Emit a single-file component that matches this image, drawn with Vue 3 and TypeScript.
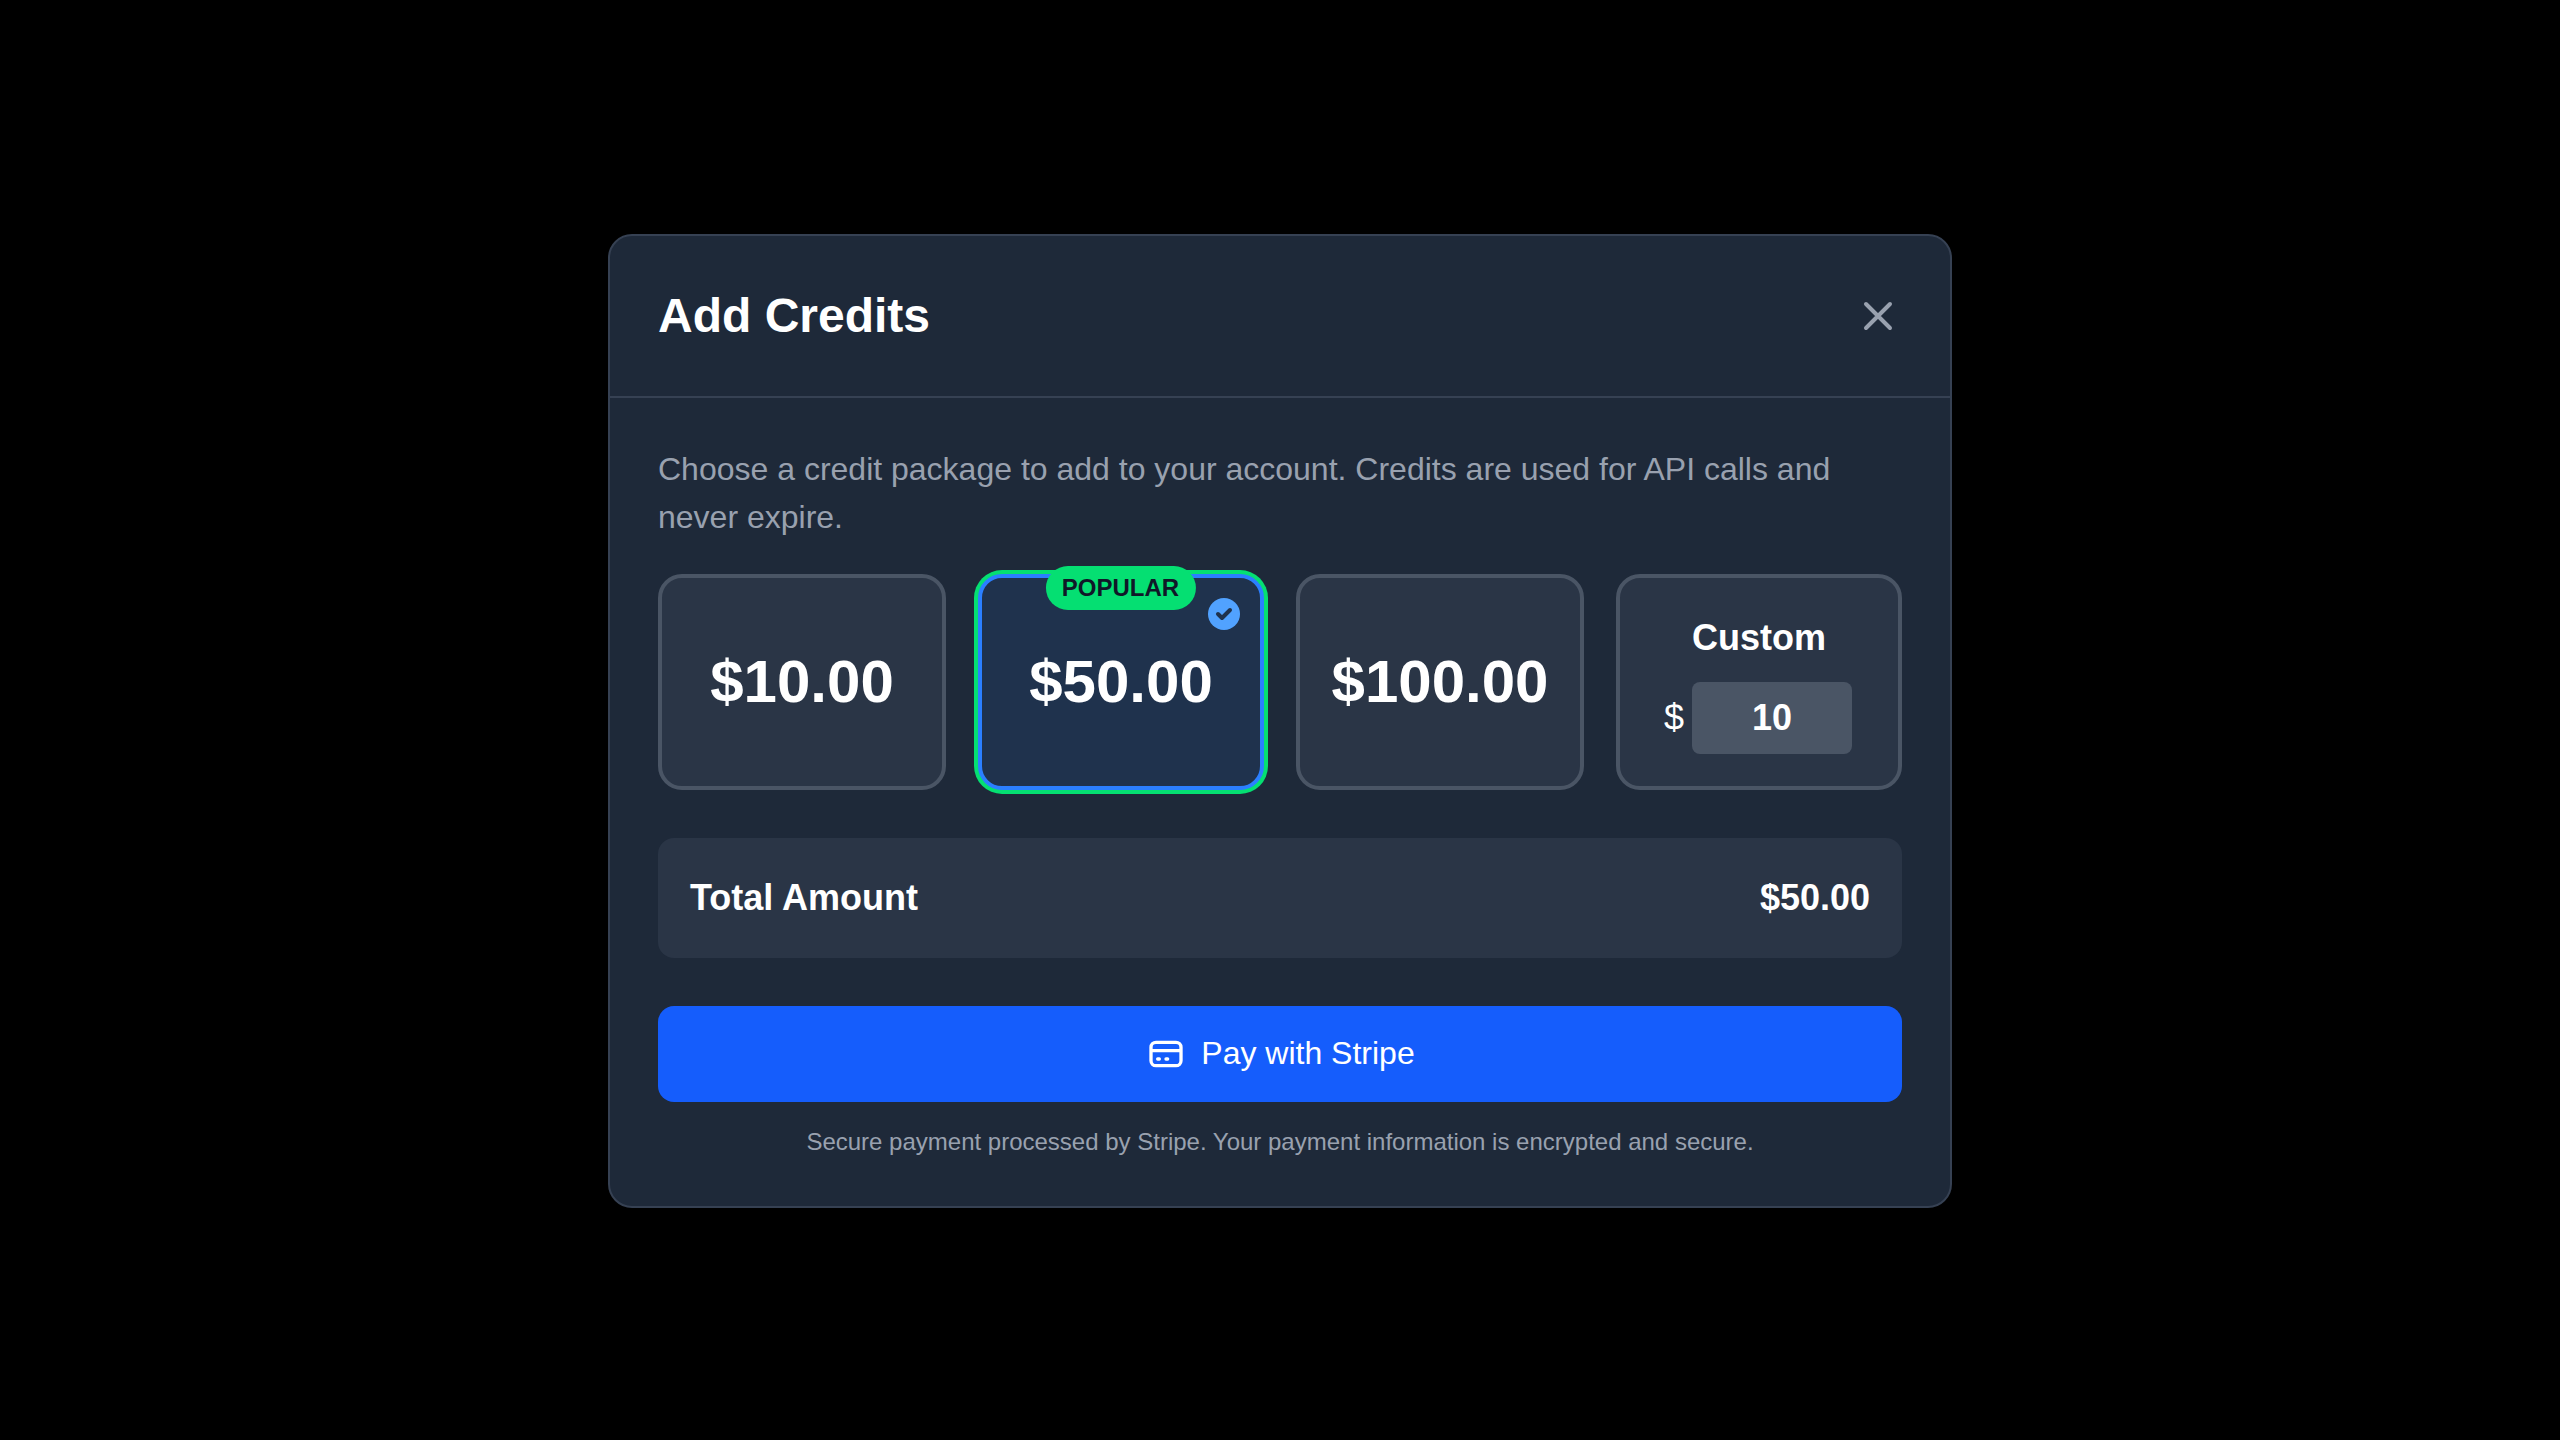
<script setup lang="ts">
import { ref } from 'vue'

const custom = ref('10')
</script>

<template>
  <div class="overlay">
    <div class="modal">
      <header class="head">
        <h2 class="title">Add Credits</h2>
        <button class="close" type="button" aria-label="Close">
          <svg width="48" height="48" viewBox="0 0 24 24" fill="none" stroke="currentColor" stroke-width="2" stroke-linecap="round" stroke-linejoin="round">
            <path d="M6 18L18 6M6 6l12 12" />
          </svg>
        </button>
      </header>
      <div class="body">
        <p class="desc">Choose a credit package to add to your account. Credits are used for API calls and never expire.</p>
        <div class="packages">
          <div class="card"><span class="amount">$10.00</span></div>
          <div class="card selected">
            <span class="badge">POPULAR</span>
            <span class="tick">
              <svg width="32" height="32" viewBox="0 0 32 32" fill="none">
                <path d="M10 16l4 4 8-8" stroke="#1f324d" stroke-width="4" stroke-linecap="round" stroke-linejoin="round" />
              </svg>
            </span>
            <span class="amount">$50.00</span>
          </div>
          <div class="card"><span class="amount">$100.00</span></div>
          <div class="card custom">
            <span class="custom-label">Custom</span>
            <div class="custom-row">
              <span class="dollar">$</span>
              <input v-model="custom" class="custom-input" type="text" />
            </div>
          </div>
        </div>
        <div class="total">
          <span>Total Amount</span>
          <span>$50.00</span>
        </div>
        <button class="pay" type="button">
          <svg class="pay-icon" width="40" height="40" viewBox="0 0 24 24" fill="none" stroke="currentColor" stroke-width="2" stroke-linecap="round" stroke-linejoin="round">
            <path d="M3 10h18M7 15h1m4 0h1m-7 4h12a3 3 0 003-3V8a3 3 0 00-3-3H6a3 3 0 00-3 3v8a3 3 0 003 3z" />
          </svg>
          <span class="pay-label">Pay with Stripe</span>
        </button>
        <p class="note">Secure payment processed by Stripe. Your payment information is encrypted and secure.</p>
      </div>
    </div>
  </div>
</template>

<style scoped>
.overlay {
  box-sizing: border-box;
  height: 1440px;
  padding-top: 2px;
  background: #000;
  display: flex;
  align-items: center;
  justify-content: center;
  font-family: "Liberation Sans", Arial, sans-serif;
  color: #fff;
}
.modal {
  box-sizing: border-box;
  width: 1344px;
  background: #1e2939;
  border: 2px solid #364153;
  border-radius: 24px;
}
.head {
  display: flex;
  align-items: center;
  justify-content: space-between;
  padding: 48px;
  border-bottom: 2px solid #364153;
}
.title {
  margin: 0;
  font-size: 48px;
  line-height: 64px;
  font-weight: 700;
}
.close {
  display: flex;
  padding: 0;
  border: 0;
  background: none;
  color: #99a1af;
}
.body {
  padding: 48px;
  display: flex;
  flex-direction: column;
}
.desc {
  margin: -1px 0 33px;
  font-size: 32px;
  line-height: 48px;
  color: #99a1af;
}
.packages {
  display: grid;
  grid-template-columns: 288px 286px 288px 286px;
  column-gap: 32px;
  margin-bottom: 48px;
}
.card {
  position: relative;
  box-sizing: border-box;
  height: 216px;
  display: flex;
  flex-direction: column;
  align-items: center;
  justify-content: center;
  background: #2a3546;
  border: 4px solid #4a5565;
  border-radius: 24px;
}
.selected {
  background: #1f324d;
  border-color: #2b7fff;
  box-shadow: 0 0 0 4px #05df72;
}
.amount {
  font-size: 60px;
  line-height: 72px;
  font-weight: 700;
}
.badge {
  position: absolute;
  top: -12px;
  left: 50%;
  transform: translateX(-50%);
  margin-left: -0.5px;
  padding: 6px 16.4px;
  border-radius: 999px;
  background: #05df72;
  color: #101828;
  font-size: 24px;
  line-height: 32px;
  font-weight: 700;
  white-space: nowrap;
}
.tick {
  position: absolute;
  top: 20px;
  right: 20px;
  width: 32px;
  height: 32px;
  border-radius: 50%;
  background: #51a2ff;
  display: flex;
}
.custom-label {
  font-size: 36px;
  line-height: 56px;
  font-weight: 700;
  margin-bottom: 16px;
}
.custom-row {
  display: flex;
  align-items: center;
  gap: 8px;
  margin-right: 2px;
}
.dollar {
  font-size: 36px;
  line-height: 56px;
}
.custom-input {
  box-sizing: border-box;
  width: 160px;
  height: 72px;
  padding: 0;
  border: 0;
  outline: 0;
  border-radius: 8px;
  background: #4a5565;
  color: #fff;
  font-family: inherit;
  font-size: 36px;
  font-weight: 700;
  text-align: center;
}
.total {
  display: flex;
  justify-content: space-between;
  align-items: center;
  padding: 32px;
  margin-bottom: 48px;
  background: #2a3546;
  border-radius: 16px;
  font-size: 36px;
  line-height: 56px;
  font-weight: 700;
}
.pay {
  height: 96px;
  display: flex;
  align-items: center;
  justify-content: center;
  gap: 15px;
  padding: 0;
  border: 0;
  border-radius: 16px;
  background: #155dfc;
  color: #fff;
  font-family: inherit;
  font-size: 32px;
  line-height: 48px;
}
.pay-icon {
  margin-left: 1px;
}
.pay-label {
  margin-bottom: 2px;
}
.note {
  margin: 24px 0 0;
  text-align: center;
  font-size: 24px;
  line-height: 32px;
  color: #99a1af;
}
</style>
